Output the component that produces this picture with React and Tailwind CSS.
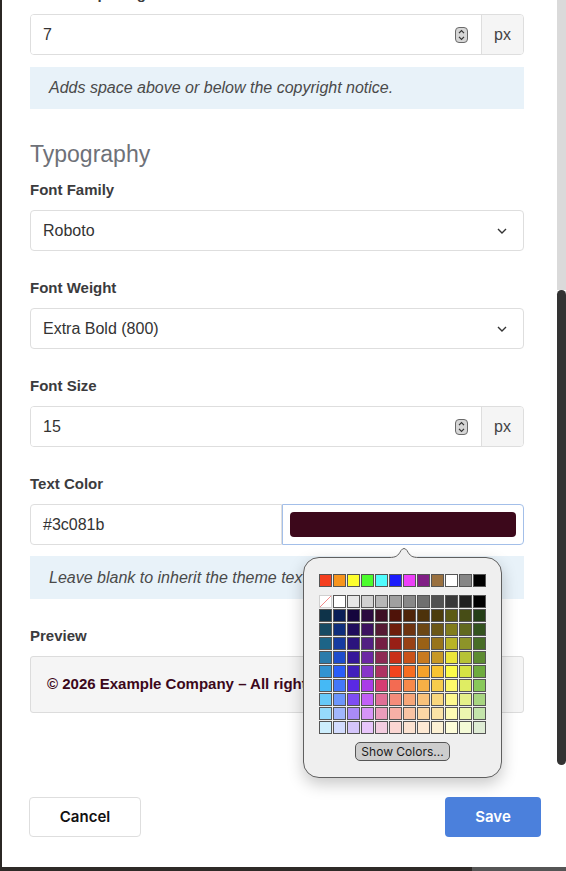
import React from "react";

const topRow = ["#f43f1f","#f7941d","#fdfe2e","#4cfc2d","#4ffcfd","#1c1cfc","#ed3ff9","#801f85","#99703f","#ffffff","#868686","#000000"];
const grayRow = ["none","#ffffff","#e6e6e6","#d0d0d0","#b6b6b6","#a0a0a0","#888888","#6f6f6f","#515151","#383838","#202020","#000000"];
const grid = [
  ["#0e3349","#0a1e56","#15063d","#2b0a40","#3d0e24","#4f1309","#4e240a","#4d320b","#4c3d0c","#5c5a15","#474d16","#253e17"],
  ["#164a63","#0f2d7c","#1f0c5c","#3c1160","#561a34","#6e1e0c","#6e3310","#6c4714","#6b5716","#817c1d","#61691f","#34531f"],
  ["#1d6487","#163ba0","#2b147d","#521f82","#741f44","#981f16","#984116","#9a6116","#98741a","#b8b326","#8d9429","#486d27"],
  ["#2b7cab","#1e4dcc","#35189a","#6c27a4","#8e2a53","#c93019","#c95119","#c87a1f","#c79826","#ebe53a","#b6c236","#5d8b32"],
  ["#3393d0","#2a5ef9","#4120bc","#8836c9","#ad3462","#f2441f","#f66d21","#f5a22b","#f8c432","#fdfb4a","#d6e344","#6fab3e"],
  ["#45b9f5","#4477f9","#5a29e4","#aa3ce8","#d53c72","#f36b52","#f6894a","#f6b046","#f7cc4c","#fdf96a","#dfed63","#88c85a"],
  ["#67caf9","#6c95fb","#7e4df3","#c160f6","#e06f96","#f48c7a","#f6a679","#f8c27a","#f9d77e","#fdf88f","#e5f089","#a8d581"],
  ["#96dbfb","#a1b7fc","#a98bf7","#d694f8","#eb9dbb","#f7b0a6","#f9c4a4","#fbd7a5","#fbe3a6","#fefbb4","#edf6b0","#c4e4ab"],
  ["#cdeefd","#d3dcfe","#d4c5fb","#e8c6fb","#f3cde0","#fad6d2","#fce3d2","#fde9d4","#fdf1d4","#fefdda","#f4fad7","#dfecd5"],
];

const sans = "font-['Liberation_Sans',Arial,sans-serif]";

function Label({ children, className = "" }) {
  return (
    <div className={`h-[20px] leading-[20px] mb-[10px] text-[15px] font-bold text-[#3b3b3d] ${className}`}>
      {children}
    </div>
  );
}

function Stepper() {
  return (
    <svg width="13" height="16" viewBox="0 0 13 16">
      <rect x="0.5" y="0.5" width="12" height="15" rx="3.5" fill="#d6d6d6" stroke="#6a6a6a" />
      <path d="M4 6.2 L6.5 3.7 L9 6.2" fill="none" stroke="#333" strokeWidth="1.2" />
      <path d="M4 9.8 L6.5 12.3 L9 9.8" fill="none" stroke="#333" strokeWidth="1.2" />
    </svg>
  );
}

function NumberInput({ value }) {
  return (
    <div className="flex h-[41px] border border-[#dedede] rounded-[4px] overflow-hidden">
      <div className="flex-1 flex items-center justify-between pl-[12px] pr-[13px] bg-white text-[16px] text-[#333]">
        <span>{value}</span>
        <Stepper />
      </div>
      <div className="w-[42px] flex items-center justify-center bg-[#f5f5f5] border-l border-[#dedede] text-[16px] text-[#444]">
        px
      </div>
    </div>
  );
}

function Select({ value }) {
  return (
    <div className="flex h-[41px] items-center justify-between border border-[#dedede] rounded-[4px] bg-white pl-[12px] pr-[16px] text-[16px] text-[#333]">
      <span>{value}</span>
      <svg width="10" height="6" viewBox="0 0 10 6">
        <path d="M1 1 L5 5 L9 1" fill="none" stroke="#333" strokeWidth="1.4" />
      </svg>
    </div>
  );
}

function Help({ children, className = "" }) {
  return (
    <div className={`flex items-center bg-[#e8f2f9] px-[19px] text-[16px] italic text-[#4a4a4a] whitespace-nowrap overflow-hidden ${className}`}>
      {children}
    </div>
  );
}

function Cell({ c }) {
  if (c === "none") {
    return (
      <div className="w-[13px] h-[13px] bg-white border border-[#cfcfcf] relative overflow-hidden">
        <svg width="13" height="13" viewBox="0 0 13 13" className="absolute -left-px -top-px">
          <path d="M1 12 L12 1" stroke="#f28a8a" strokeWidth="1" />
        </svg>
      </div>
    );
  }
  return <div className="w-[13px] h-[13px] border border-[#555]" style={{ backgroundColor: c }} />;
}

function Popover() {
  return (
    <div className="absolute left-[303px] top-[557px] w-[199px] h-[221px] border border-[#5f5f5f] rounded-[16px] bg-[#efefef] shadow-[0_6px_16px_rgba(0,0,0,0.22)]">
      <svg width="30" height="12" viewBox="0 0 30 12" className="absolute left-[85px] top-[-11px]">
        <rect x="1" y="9" width="28" height="3" fill="#efefef" />
        <path d="M0 10.5 C7 10.5 9 9 12 3.5 Q15 -0.5 18 3.5 C21 9 23 10.5 30 10.5" fill="#efefef" stroke="#5f5f5f" strokeWidth="1" />
      </svg>
      <div className="flex flex-col items-center pt-[16px]">
        <div className="flex gap-px">
          {topRow.map((c, i) => <Cell key={i} c={c} />)}
        </div>
        <div className="flex flex-col gap-px mt-[8px]">
          <div className="flex gap-px">
            {grayRow.map((c, i) => <Cell key={i} c={c} />)}
          </div>
          {grid.map((row, r) => (
            <div key={r} className="flex gap-px">
              {row.map((c, i) => <Cell key={i} c={c} />)}
            </div>
          ))}
        </div>
        <div className="mt-[8px] w-[95px] h-[19px] flex items-center justify-center rounded-[5px] border border-[#555] bg-[#cdcdcd] text-[12px] text-[#1a1a1a] font-['Inter',sans-serif] leading-none">
          Show Colors...
        </div>
      </div>
    </div>
  );
}

export default function App() {
  return (
    <div className={`relative w-[566px] h-[871px] bg-white overflow-hidden flex flex-col ${sans}`}>
      <div className="flex flex-1 min-h-0">
        <div className="w-[2px] bg-[#2b2724]" />
        <div className="flex-1 flex flex-col min-w-0">
          <div className="h-[767px] flex">
            <div className="flex-1 min-w-0 overflow-hidden pl-[28px] pr-[33px]">
              <div className="mt-[-16px]">
                <Label>Vertical Spacing</Label>
                <NumberInput value="7" />
                <Help className="mt-[12px] h-[42px]">Adds space above or below the copyright notice.</Help>

                <div className="mt-[31px] mb-[12px] h-[28px] leading-[28px] text-[23px] text-[#6e7178]">Typography</div>

                <Label>Font Family</Label>
                <Select value="Roboto" />

                <Label className="mt-[27px]">Font Weight</Label>
                <Select value="Extra Bold (800)" />

                <Label className="mt-[27px]">Font Size</Label>
                <NumberInput value="15" />

                <Label className="mt-[27px]">Text Color</Label>
                <div className="flex h-[41px]">
                  <div className="w-[252px] flex items-center pl-[12px] border border-[#dedede] rounded-l-[4px] bg-white text-[16px] text-[#333]">
                    #3c081b
                  </div>
                  <div className="flex-1 p-[7px] border border-[#a3bfe9] rounded-r-[4px] bg-white">
                    <div className="h-full rounded-[4px] bg-[#3c081b]" />
                  </div>
                </div>
                <Help className="mt-[11px] h-[43px]">Leave blank to inherit the theme text color.</Help>

                <Label className="mt-[27px]">Preview</Label>
                <div className="h-[57px] flex items-center px-[16px] border border-[#dcdcdc] rounded-[3px] bg-[#f5f5f5] text-[15px] font-bold text-[#3c081b] whitespace-nowrap overflow-hidden">
                  © 2026 Example Company – All rights reserved.
                </div>
              </div>
            </div>
            <div className="w-[9px] flex flex-col">
              <div className="h-[290px] bg-[#dadada]" />
              <div className="h-[475px] bg-[#333333] rounded-[5px]" />
            </div>
          </div>
          <div className="flex-1 flex items-start justify-between pl-[27px] pr-[25px] pt-[30px] font-['Inter',sans-serif]">
            <div className="w-[112px] h-[40px] flex items-center justify-center border border-[#dedede] rounded-[4px] bg-white text-[15px] font-semibold text-[#111]">
              Cancel
            </div>
            <div className="w-[96px] h-[40px] flex items-center justify-center rounded-[4px] bg-[#4b80dc] text-[15px] font-semibold text-white">
              Save
            </div>
          </div>
        </div>
      </div>
      <div className="h-[4px] flex">
        <div className="w-[472px] bg-[#2e2a27]" />
        <div className="flex-1 bg-[#555]" />
      </div>
      <Popover />
    </div>
  );
}
